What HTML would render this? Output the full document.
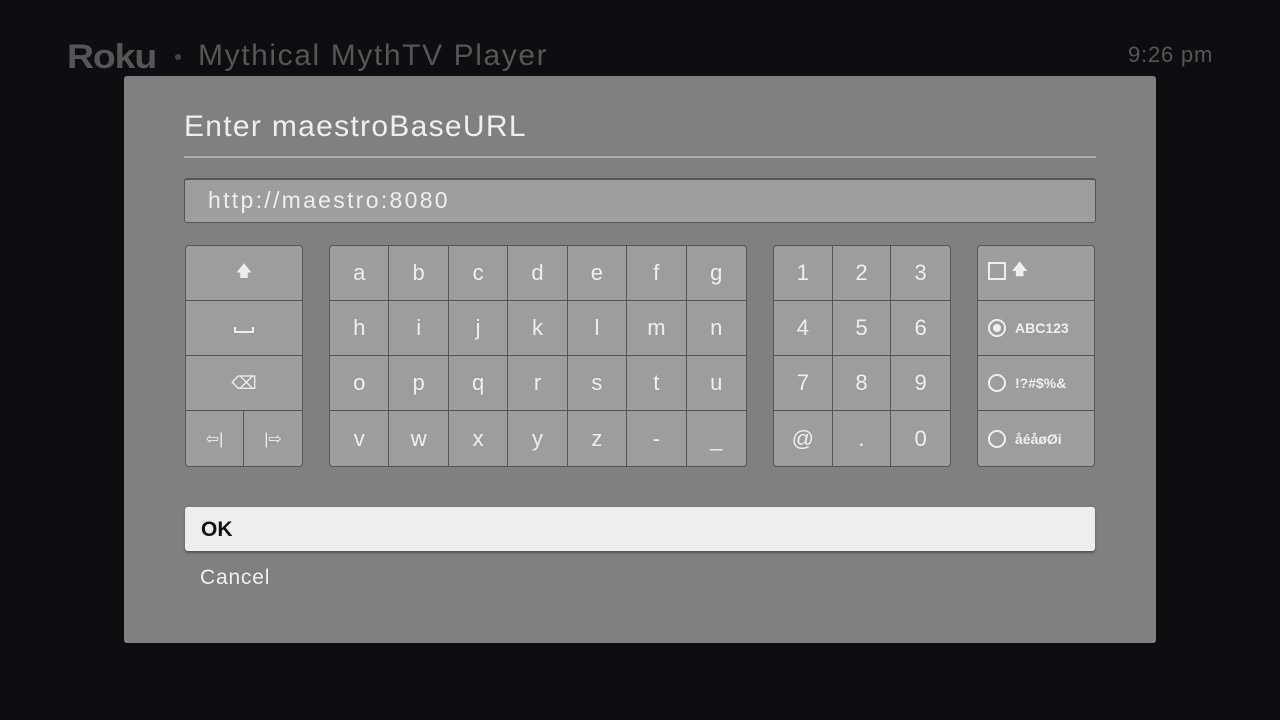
<!DOCTYPE html><html><head><style>
*{margin:0;padding:0;box-sizing:border-box}
body{width:1280px;height:720px;background:#0e0d12;position:relative;overflow:hidden;font-family:"Liberation Sans",sans-serif;color:#eee}
.a{position:absolute}
.blk{position:absolute;top:245px;height:222px;background:#9d9d9d;border:1px solid #555;border-radius:4px;display:grid;grid-template-rows:repeat(4,1fr);overflow:hidden}
.blk div{border-right:1px solid #555;border-bottom:1px solid #555;display:flex;align-items:center;justify-content:center;font-size:22px;color:#eee}
.blk .r{display:flex;align-items:center;font-size:14px;font-weight:bold;justify-content:flex-start;padding-left:10px;white-space:nowrap}
.rad{width:18px;height:18px;border:2px solid #eee;border-radius:50%;margin-right:9px;display:inline-flex;align-items:center;justify-content:center;flex:none}
</style></head><body>
<div class="a" style="left:67px;top:38px;font-size:34px;font-weight:bold;color:#555;letter-spacing:-1px;transform:scaleX(1.1);transform-origin:left">Roku</div>
<div class="a" style="left:175px;top:54px;width:6px;height:6px;border-radius:50%;background:#444"></div>
<div class="a" style="left:198px;top:39px;font-size:30px;color:#555;letter-spacing:1.6px">Mythical MythTV Player</div>
<div class="a" style="left:1128px;top:42px;font-size:22px;color:#555;letter-spacing:0.8px">9:26 pm</div>
<div class="a" style="left:124px;top:76px;width:1032px;height:567px;background:#808080;border-radius:3px"></div>
<div class="a" style="left:184px;top:110px;font-size:30px;letter-spacing:1.3px">Enter maestroBaseURL</div>
<div class="a" style="left:184px;top:156px;width:912px;height:2px;background:#aaa"></div>
<div class="a" style="left:184px;top:178px;width:912px;height:45px;background:#9e9e9e;border:1px solid #555;border-top:2px solid #555;border-radius:3px;font-size:23px;padding:7px 0 0 23px;letter-spacing:2.3px">http://maestro:8080</div>

<div class="blk" style="left:185px;width:118px;grid-template-columns:1fr 1fr">
<div style="grid-column:span 2;font-size:16px;border-right:none">🡅</div>
<div style="grid-column:span 2;border-right:none"><span style="display:block;width:20px;height:6px;border:2px solid #eee;border-top:none;margin-top:4px"></span></div>
<div style="grid-column:span 2;font-size:18px;border-right:none">⌫</div>
<div style="font-size:16px;border-bottom:none">⇦|</div><div style="font-size:16px;border-bottom:none;border-right:none">|⇨</div>
</div>

<div class="blk" style="left:329px;width:418px;grid-template-columns:repeat(7,1fr)">
<div>a</div><div>b</div><div>c</div><div>d</div><div>e</div><div>f</div><div style="border-right:none">g</div>
<div>h</div><div>i</div><div>j</div><div>k</div><div>l</div><div>m</div><div style="border-right:none">n</div>
<div>o</div><div>p</div><div>q</div><div>r</div><div>s</div><div>t</div><div style="border-right:none">u</div>
<div style="border-bottom:none">v</div><div style="border-bottom:none">w</div><div style="border-bottom:none">x</div><div style="border-bottom:none">y</div><div style="border-bottom:none">z</div><div style="border-bottom:none">-</div><div style="border:none">_</div>
</div>

<div class="blk" style="left:773px;width:178px;grid-template-columns:repeat(3,1fr)">
<div>1</div><div>2</div><div style="border-right:none">3</div>
<div>4</div><div>5</div><div style="border-right:none">6</div>
<div>7</div><div>8</div><div style="border-right:none">9</div>
<div style="border-bottom:none">@</div><div style="border-bottom:none">.</div><div style="border:none">0</div>
</div>

<div class="blk" style="left:977px;width:118px;grid-template-columns:1fr">
<div class="r" style="border-right:none;padding-bottom:4px"><span style="width:18px;height:18px;border:2px solid #eee;margin-right:6px;display:inline-block"></span><span style="font-size:15px">🡅</span></div>
<div class="r" style="border-right:none"><span class="rad"><span style="width:8px;height:8px;border-radius:50%;background:#eee"></span></span>ABC123</div>
<div class="r" style="border-right:none"><span class="rad"></span>!?#$%&amp;</div>
<div class="r" style="border:none"><span class="rad"></span>åéåøØi</div>
</div>

<div class="a" style="left:185px;top:507px;width:910px;height:44px;background:#eeeeee;border-radius:3px;box-shadow:0 2px 2px #555;color:#111;font-size:21px;font-weight:bold;padding:11px 0 0 16px">OK</div>
<div class="a" style="left:200px;top:566px;font-size:21px;letter-spacing:0.8px">Cancel</div>
</body></html>
